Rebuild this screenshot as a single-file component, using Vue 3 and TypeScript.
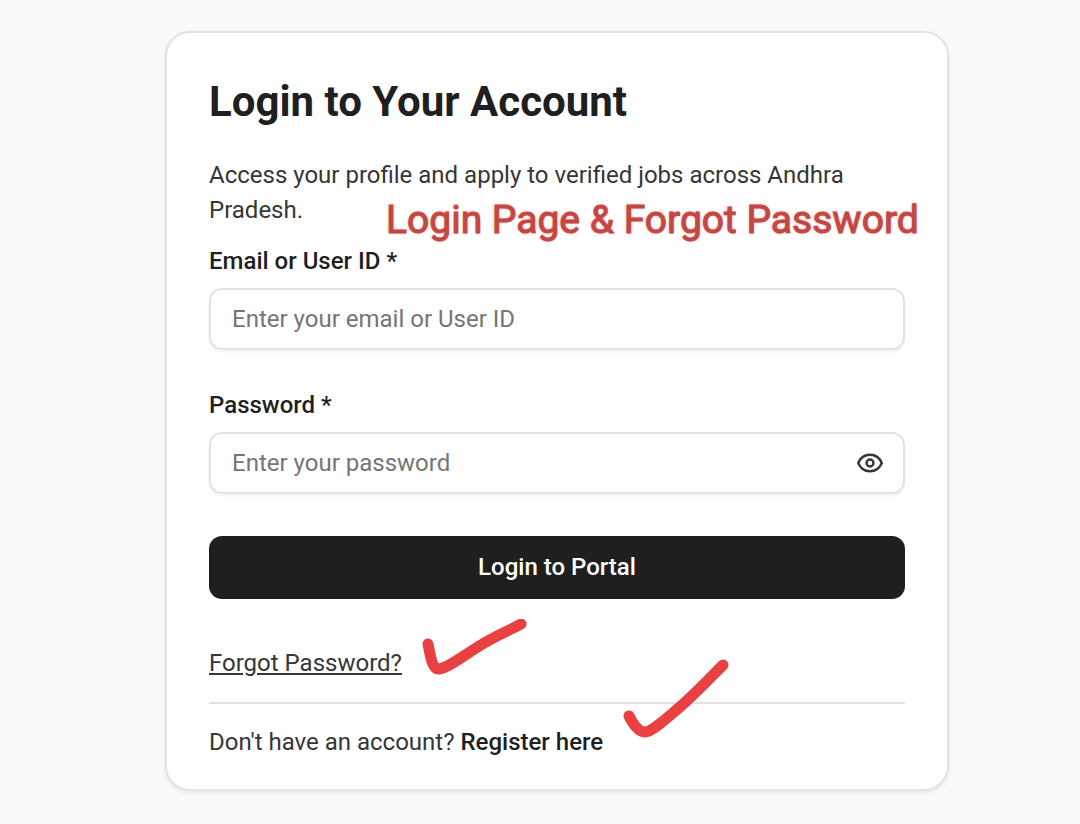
<script setup lang="ts">
import { ref } from 'vue'

const userId = ref('')
const password = ref('')
const showPassword = ref(false)
</script>

<template>
  <main class="page">
    <section class="card">
      <h1>Login to Your Account</h1>
      <div class="intro">
        <p>Access your profile and apply to verified jobs across Andhra Pradesh.</p>
        <span class="note">Login Page &amp; Forgot Password</span>
      </div>
      <form @submit.prevent>
        <div class="field">
          <label for="user-id">Email or User ID *</label>
          <input id="user-id" v-model="userId" type="text" placeholder="Enter your email or User ID" />
        </div>
        <div class="field">
          <label for="password">Password *</label>
          <div class="secret">
            <input
              id="password"
              v-model="password"
              :type="showPassword ? 'text' : 'password'"
              placeholder="Enter your password"
            />
            <button class="eye" type="button" aria-label="Show password" @click="showPassword = !showPassword">
              <svg viewBox="0 0 28 28" width="28" height="28" fill="none" stroke="#363636" stroke-width="2.4">
                <path d="M2.2 14C4.600 8.200 9 5.700 14 5.700S23.400 8.200 25.800 14C23.400 19.800 19 22.300 14 22.300S4.600 19.800 2.200 14Z" stroke-linejoin="round" />
                <circle cx="14" cy="14" r="3.500" />
              </svg>
            </button>
          </div>
        </div>
        <button class="submit" type="submit">Login to Portal</button>
      </form>
      <div class="row forgot">
        <a href="#forgot">Forgot Password?</a>
        <svg class="tick tick-forgot" viewBox="0 0 110 66" width="110" height="66" aria-hidden="true">
          <path d="M9 25C11 35 13 50 19 50C29 50 49 33 67 23C79 16 91 11 102 5" />
        </svg>
      </div>
      <div class="row register">
        <p>Don't have an account? <a href="#register">Register here</a></p>
        <svg class="tick tick-register" viewBox="0 0 110 90" width="110" height="90" aria-hidden="true">
          <path d="M9 60C13 68 18 76 25 76C32 76 48 61 61 50C76 37 91 21 103 9" />
        </svg>
      </div>
    </section>
  </main>
</template>

<style>
body {
  margin: 0;
  background: #fafafa;
}
</style>

<style scoped>
* {
  box-sizing: border-box;
}

.page {
  padding: 31px 131px 34px 165px;
  font-family: Roboto, "Liberation Sans", sans-serif;
  font-size: 24px;
  line-height: 35px;
  color: #363636;
}

.card {
  padding: 44px 42px 29px;
  background: #fff;
  border: 2px solid #e3e3e3;
  border-radius: 25px;
  box-shadow: 0 2px 4px rgba(0, 0, 0, 0.08);
}

h1 {
  margin: 0 0 31px;
  font-size: 42px;
  line-height: 50px;
  font-weight: 700;
  color: #1f1f1f;
}

p {
  margin: 0;
}

.intro {
  position: relative;
  margin-bottom: 19px;
}

.note {
  position: absolute;
  top: 38px;
  left: 177px;
  font-size: 39px;
  line-height: 48px;
  white-space: nowrap;
  color: #c54744;
  -webkit-text-stroke: 1px #c54744;
  text-shadow: 0 0 3px #e9a09a;
}

.field {
  display: flex;
  flex-direction: column;
  gap: 13px;
}

.field + .field {
  margin-top: 41px;
}

label {
  line-height: 28px;
  font-weight: 500;
  color: #1f1f1f;
}

input {
  display: block;
  width: 100%;
  height: 62px;
  padding: 0 21px;
  font: inherit;
  color: #1f1f1f;
  background: #fff;
  border: 2px solid #e2e2e2;
  border-radius: 13px;
  box-shadow: 0 2px 3px rgba(0, 0, 0, 0.05);
}

input::placeholder {
  color: #757575;
}

.secret {
  position: relative;
}

.secret input {
  padding-right: 64px;
}

.eye {
  position: absolute;
  top: 17px;
  right: 21px;
  display: flex;
  padding: 0;
  background: none;
  border: 0;
}

.submit {
  display: block;
  width: 100%;
  height: 63px;
  margin-top: 42px;
  font: inherit;
  font-weight: 500;
  color: #fff;
  background: #1f1f1f;
  border: 0;
  border-radius: 13px;
}

.row {
  position: relative;
}

.forgot {
  margin-top: 47px;
  padding-bottom: 21px;
  border-bottom: 2px solid #e2e2e2;
}

.forgot a {
  color: inherit;
  text-underline-offset: 2px;
  text-decoration-thickness: 2px;
}

.register {
  padding-top: 21px;
}

.register a {
  font-weight: 500;
  color: #1f1f1f;
  text-decoration: none;
}

.tick {
  position: absolute;
  fill: none;
  stroke: #e94141;
  stroke-width: 11;
  stroke-linecap: round;
  stroke-linejoin: round;
}

.tick-forgot {
  top: -27px;
  left: 210px;
}

.tick-register {
  top: -48px;
  left: 411px;
}
</style>
